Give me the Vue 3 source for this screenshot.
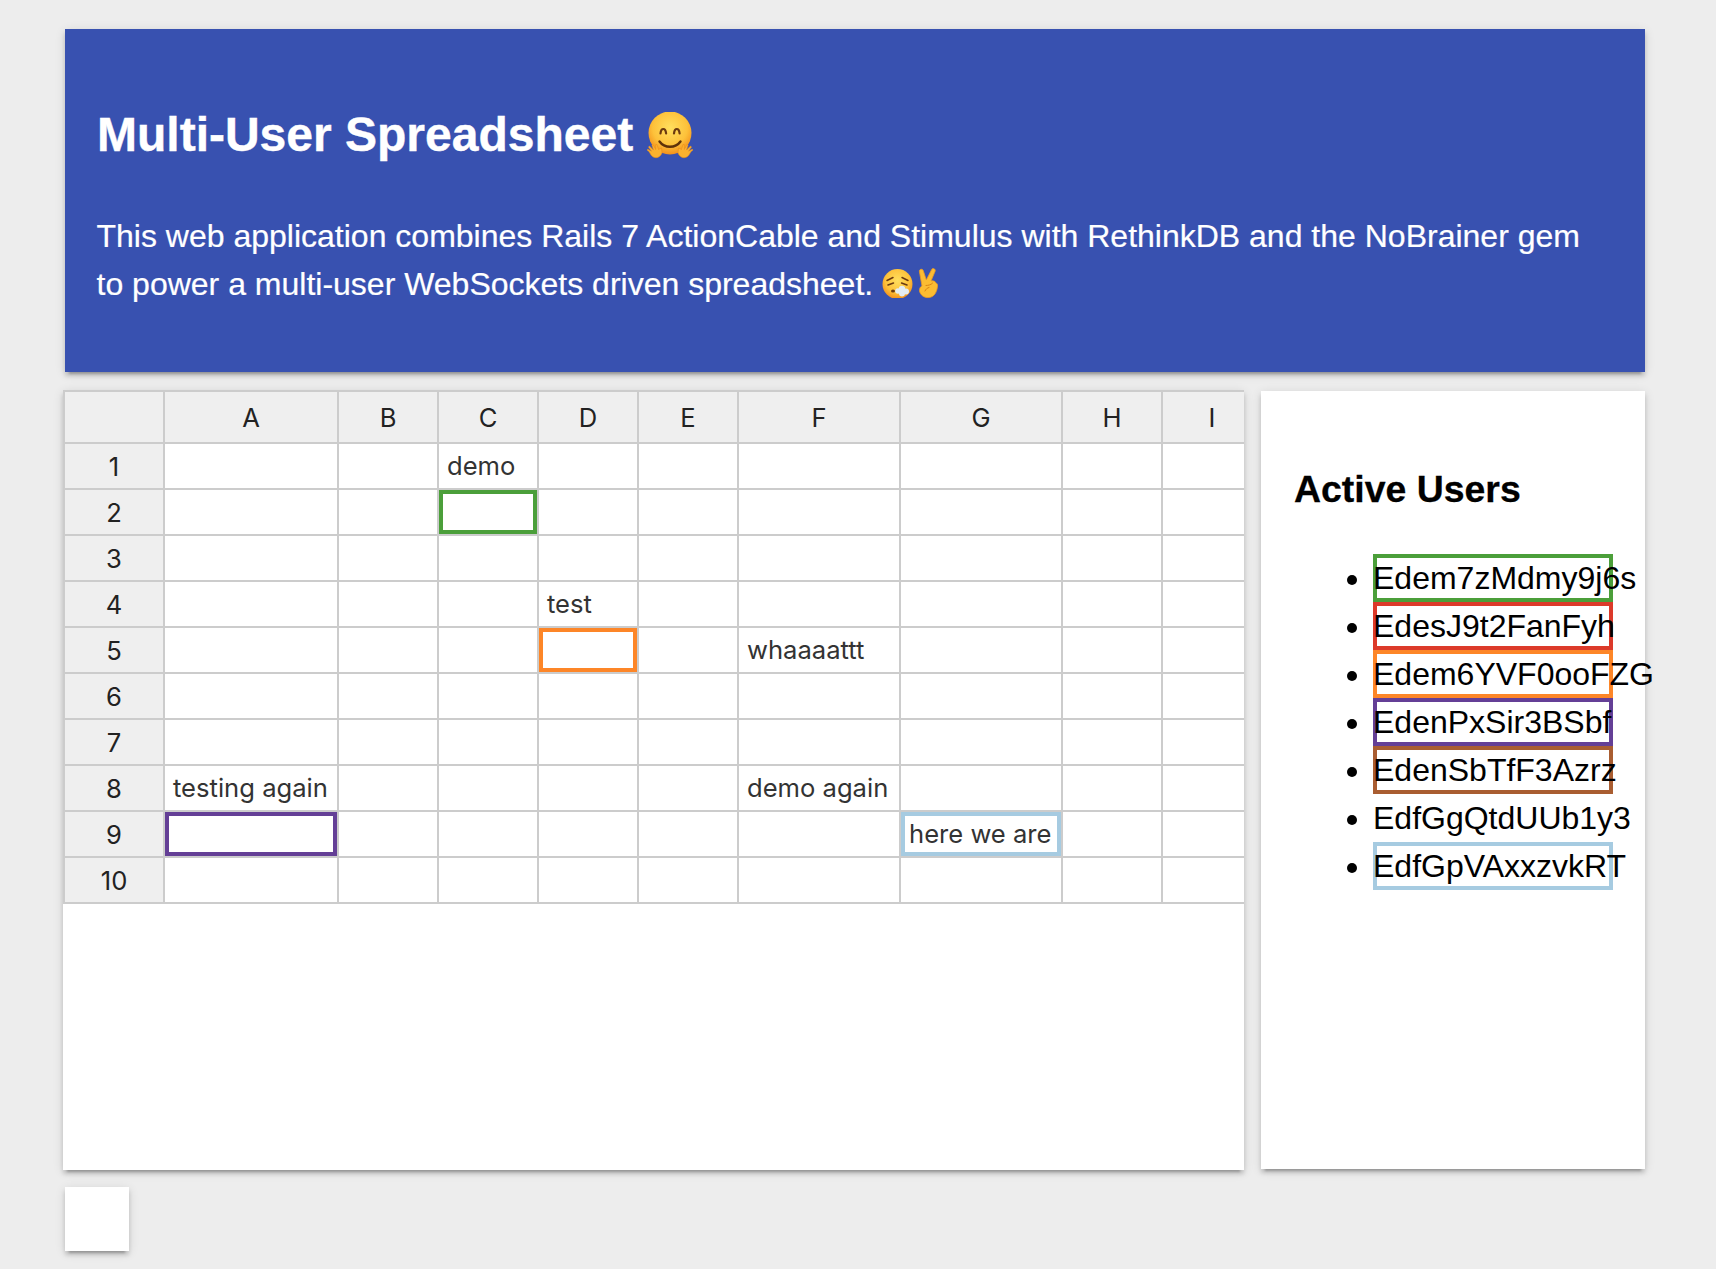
<script setup>
const widths = [100, 174, 100, 100, 100, 100, 162, 162, 100, 100]
const cols = ['A', 'B', 'C', 'D', 'E', 'F', 'G', 'H', 'I']

const cells = {
  'C1': { text: 'demo' },
  'C2': { cursor: 'green' },
  'D4': { text: 'test' },
  'D5': { cursor: 'orange' },
  'F5': { text: 'whaaaattt' },
  'A8': { text: 'testing again' },
  'F8': { text: 'demo again' },
  'A9': { cursor: 'purple' },
  'G9': { text: 'here we are', cursor: 'blue' }
}
const rows = Array.from({ length: 10 }, (_, i) => i + 1)
const cell = (col, row) => cells[col + row] || {}

const users = [
  { id: 'Edem7zMdmy9j6s', cursor: 'green' },
  { id: 'EdesJ9t2FanFyh', cursor: 'red' },
  { id: 'Edem6YVF0ooFZG', cursor: 'orange' },
  { id: 'EdenPxSir3BSbf', cursor: 'purple' },
  { id: 'EdenSbTfF3Azrz', cursor: 'brown' },
  { id: 'EdfGgQtdUUb1y3', cursor: '' },
  { id: 'EdfGpVAxxzvkRT', cursor: 'blue' }
]
</script>

<template>
  <div class="page">
    <header class="hero">
      <h1 class="hero-title">Multi-User Spreadsheet <svg class="emoji-hug" width="48" height="48" viewBox="0 0 48 48" aria-hidden="true">
          <defs>
            <radialGradient id="faceA" cx="50%" cy="38%" r="62%">
              <stop offset="0" stop-color="#ffdf5e" />
              <stop offset="0.65" stop-color="#fdc13a" />
              <stop offset="1" stop-color="#f3901c" />
            </radialGradient>
          </defs>
          <circle cx="24" cy="21" r="21.5" fill="url(#faceA)" />
          <path d="M14.5 21.5c.6-6 5-6 5.6 0M28 21.5c.6-6 5-6 5.6 0" fill="none" stroke="#6b3a10" stroke-width="2.2" stroke-linecap="round" />
          <path d="M13.500 29.500c5 7 16 7 21 0" fill="none" stroke="#5f3209" stroke-width="2.4" stroke-linecap="round" />
          <g fill="#fcb22f" stroke="#ec8f1a" stroke-width=".6">
            <path d="M16 41c-2 5-7 6-10 3-1.500-1.500-2-3-3-4.500l-2-1.500 .8-.8 3.700 2-3-4.300 1-.8 4 4-1.600-5 1.200-.5 2.600 4.800v-4.800l1.300-.1 1.500 5 3-1.500z" />
            <path d="M32 41c2 5 7 6 10 3 1.500-1.500 2-3 3-4.500l2-1.500-.8-.8-3.700 2 3-4.300-1-.8-4 4 1.600-5-1.200-.5-2.600 4.800v-4.800l-1.300-.1-1.500 5-3-1.500z" />
          </g>
        </svg></h1>
      <p class="hero-text">
        This web application combines Rails 7 ActionCable and Stimulus with RethinkDB and the NoBrainer gem to power a multi-user WebSockets driven spreadsheet. <svg class="emoji-face" width="32" height="32" viewBox="0 0 32 32" aria-hidden="true">
          <defs>
            <radialGradient id="faceB" cx="50%" cy="38%" r="62%">
              <stop offset="0" stop-color="#ffdf5e" />
              <stop offset="0.65" stop-color="#fdc13a" />
              <stop offset="1" stop-color="#f3901c" />
            </radialGradient>
          </defs>
          <circle cx="15.500" cy="18" r="15" fill="url(#faceB)" />
          <path d="M5 14.500l6-3M26 14.500l-6-3M6 19l5.500-2M25 19l-5.500-2" fill="none" stroke="#6b3a10" stroke-width="1.500" stroke-linecap="round" />
          <ellipse cx="11" cy="25" rx="2" ry="1.600" fill="#6b3a10" />
          <g fill="#e4edf2">
            <circle cx="16" cy="25" r="2.800" />
            <circle cx="20" cy="23" r="3.200" />
            <circle cx="24" cy="25.500" r="3" />
            <circle cx="20" cy="27.500" r="3" />
          </g>
        </svg><svg class="emoji-hand" width="32" height="32" viewBox="0 0 32 32" aria-hidden="true">
          <path d="M8 18 5.400 3.500C5 1 8.600 .4 9.300 2.800L12.300 12 17.500 1.800C18.300-.4 21.600 .4 21.200 3L17 13c2-.6 4.500.2 4.800 2 1 0 2 1.300 1.700 3-.4 5-2.700 11.600-9.500 11.600C8.500 29.600 5 25 5.500 21.500 5.800 19.800 6.700 18.600 8 18z" fill="#fcbc32" stroke="#ed9a1f" stroke-width=".8" />
          <path d="M12 17.500c2 0 5-.6 6.500-2.300M11 23c1-2 2-3 4-3.500" fill="none" stroke="#d98316" stroke-width="1" stroke-linecap="round" />
        </svg>
      </p>
    </header>

    <div class="workspace">
      <main class="sheet-card">
        <table class="sheet">
          <colgroup>
            <col v-for="(w, i) in widths" :key="i" :style="{ width: w + 'px' }" />
          </colgroup>
          <thead>
            <tr>
              <th class="corner"></th>
              <th v-for="c in cols" :key="c">{{ c }}</th>
            </tr>
          </thead>
          <tbody>
            <tr v-for="r in rows" :key="r">
              <th class="row-head">{{ r }}</th>
              <td v-for="c in cols" :key="c">
                <div class="cell" :class="cell(c, r).cursor && 'cur-' + cell(c, r).cursor">{{ cell(c, r).text }}</div>
              </td>
            </tr>
          </tbody>
        </table>
      </main>

      <aside class="users">
        <h3 class="users-title">Active Users</h3>
        <ul class="users-list">
          <li v-for="u in users" :key="u.id" class="user" :class="u.cursor && 'cur-' + u.cursor">{{ u.id }}</li>
        </ul>
      </aside>
    </div>

    <div class="tile"></div>
  </div>
</template>

<style>
html, body {
  margin: 0;
  background: #ededed;
}
</style>

<style scoped>
.page {
  box-sizing: border-box;
  width: 1716px;
  height: 1269px;
  padding: 29px 0 0 63px;
  overflow: hidden;
  font-family: "Liberation Sans", Arial, sans-serif;
  color: #000;
}

.hero {
  box-sizing: border-box;
  width: 1580px;
  height: 343px;
  margin-left: 2px;
  padding: 78px 33px 0 31.5px;
  background: #3851b0;
  color: #fff;
  box-shadow: 0 4px 4px 0 rgba(0, 0, 0, .14), 0 6px 2px -4px rgba(0, 0, 0, .2), 0 2px 10px 0 rgba(0, 0, 0, .12);
}
.hero-title {
  margin: 0;
  padding-left: .5px;
  font-size: 48px;
  line-height: 56px;
  font-weight: 700;
  -webkit-text-stroke: .4px #fff;
}
.emoji-hug {
  vertical-align: -9px;
}
.hero-text {
  margin: 49px 0 0;
  font-size: 32px;
  line-height: 48px;
  -webkit-text-stroke: .2px #fff;
}
.emoji-face {
  vertical-align: -3px;
}
.emoji-hand {
  vertical-align: -5px;
}

.workspace {
  display: flex;
  align-items: flex-start;
  gap: 17px;
  margin-top: 18px;
}

.sheet-card {
  width: 1181px;
  height: 780px;
  flex: none;
  overflow: hidden;
  background: #fff;
  box-shadow: 0 4px 4px 0 rgba(0, 0, 0, .14), 0 6px 2px -4px rgba(0, 0, 0, .2), 0 2px 10px 0 rgba(0, 0, 0, .12);
}
.sheet {
  table-layout: fixed;
  width: 1200px;
  border-collapse: separate;
  border-spacing: 0;
  border-top: 2px solid #ccc;
  border-left: 2px solid #ccc;
  font-family: Inter, "Liberation Sans", sans-serif;
  font-size: 25.6px;
  color: #333;
}
.sheet th {
  box-sizing: border-box;
  padding: 0;
  height: 52px;
  background: #efefef;
  border-right: 2px solid #ccc;
  border-bottom: 2px solid #ccc;
  font-weight: 400;
  color: #222;
  text-align: center;
}
.sheet tbody th {
  height: 46px;
}
.sheet td {
  box-sizing: border-box;
  height: 46px;
  padding: 0;
  background: #fff;
  border-right: 2px solid #ccc;
  border-bottom: 2px solid #ccc;
}
.cell {
  box-sizing: border-box;
  height: 44px;
  padding: 0 8px;
  line-height: 44px;
  white-space: nowrap;
  overflow: hidden;
}

.users {
  box-sizing: border-box;
  width: 384px;
  height: 778px;
  flex: none;
  margin-top: 1px;
  padding: 74px 0 0 33px;
  background: #fff;
  box-shadow: 0 4px 4px 0 rgba(0, 0, 0, .14), 0 6px 2px -4px rgba(0, 0, 0, .2), 0 2px 10px 0 rgba(0, 0, 0, .12);
}
.users-title {
  margin: 0;
  font-size: 37.44px;
  line-height: 48px;
  font-weight: 700;
  -webkit-text-stroke: .3px #000;
}
.users-list {
  margin: 41px 0 0;
  padding: 0 0 0 79px;
  list-style: disc;
}
.user {
  box-sizing: border-box;
  width: 240px;
  height: 48px;
  font-size: 32px;
  line-height: 48px;
  white-space: nowrap;
}

.cur-green { box-shadow: inset 0 0 0 4px #4b9f3a; }
.cur-red { box-shadow: inset 0 0 0 4px #dc3a2a; }
.cur-orange { box-shadow: inset 0 0 0 4px #fd8628; }
.cur-purple { box-shadow: inset 0 0 0 4px #643f96; }
.cur-brown { box-shadow: inset 0 0 0 4px #a95d31; }
.cur-blue { box-shadow: inset 0 0 0 4px #a6cbe1; }

.tile {
  width: 64px;
  height: 64px;
  margin: 17px 0 0 2px;
  background: #fff;
  box-shadow: 0 4px 4px 0 rgba(0, 0, 0, .14), 0 6px 2px -4px rgba(0, 0, 0, .2), 0 2px 10px 0 rgba(0, 0, 0, .12);
}
</style>
